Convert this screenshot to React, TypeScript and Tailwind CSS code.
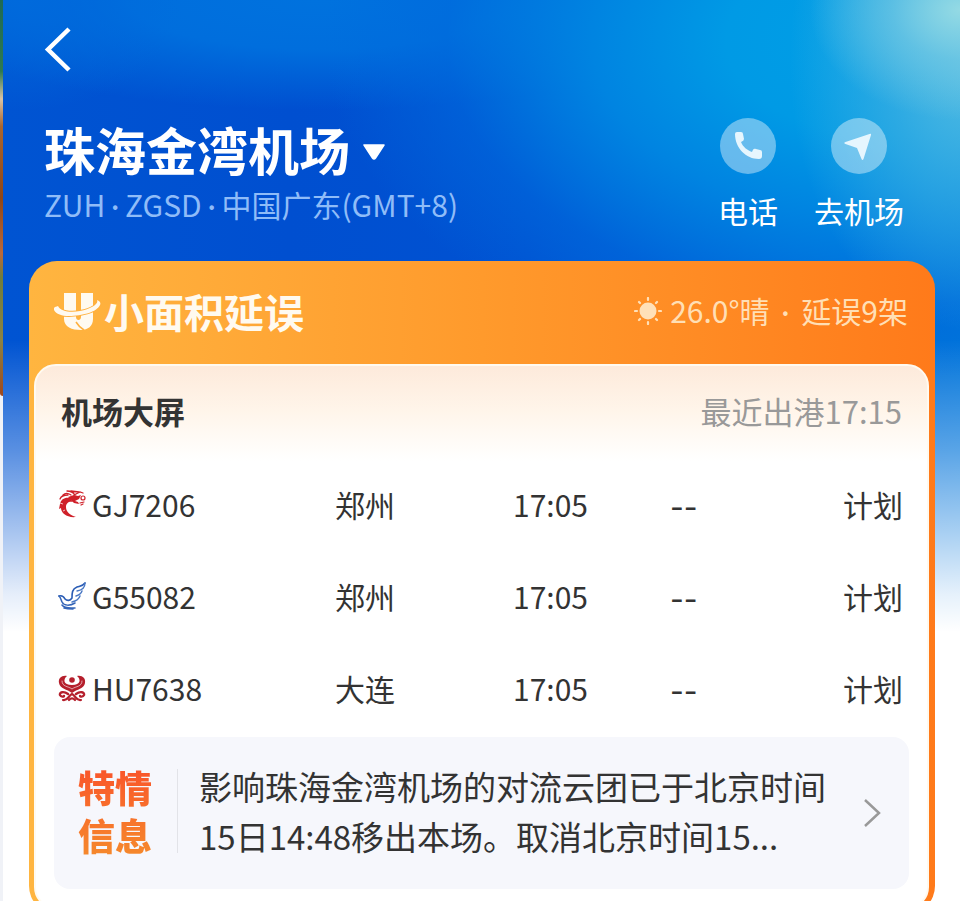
import React from "react";

type Flight = {
  code: string;
  city: string;
  time: string;
  actual: string;
  status: string;
  logo: React.ReactNode;
};

const DragonLogo = () => (
  <svg className="size-7 shrink-0" viewBox="0 0 28 28" fill="none" aria-hidden="true">
    <path d="M2 14c1-5 5-7 10-6l3 4c-4-1-7 1-7 5 0 5 4 8 10 10C9 28 3 23 3 18l-2 1z" fill="#cf2029" />
    <path
      d="M2 9c1-3 4-4 8-4M5 5c2-2 5-2 8 0M9 1c4 0 6 1 8 4M13 1l8 1M16 5l6-3 3 1"
      stroke="#cf2029"
      strokeWidth="1.300"
      strokeLinecap="round"
    />
    <path d="M10 7l6-2 4 1 3-1-2 4-4 2 3 1 1 2-5-1-3-3z" fill="#cf2029" />
    <path d="M22 13l4-1M23 15l2-1" stroke="#cf2029" strokeWidth="1.200" strokeLinecap="round" />
    <circle cx="25" cy="8" r="2" stroke="#cf2029" strokeWidth="1.200" />
    <path d="M2 13l3 1M5 21l2-1" stroke="#fff" strokeWidth="0.700" />
  </svg>
);

const BirdLogo = () => (
  <svg className="size-7 shrink-0" viewBox="0 0 28 28" fill="none" strokeLinecap="round" aria-hidden="true">
    <path d="M1 14c3-1 5 1 6 3 2 2 5 2 7-1 0-5 0-9 5-11 3-1 6-1 8-4" stroke="#2b5db5" strokeWidth="1.600" />
    <path d="M27 1c0 4-2 7-8 8M24 9c-1 3-3 4-6 5M22 14c-1 3-4 5-8 6" stroke="#4a78c4" strokeWidth="1.400" />
    <path d="M1 14c2 2 2 4 3 6 2 4 8 4 13 1M4 23c3 4 8 3 13 3M6 26c3 1 6 1 9 1" stroke="#3565b8" strokeWidth="1.500" />
  </svg>
);

const PhoenixLogo = () => (
  <svg className="size-7 shrink-0" viewBox="0 0 28 28" fill="none" strokeLinecap="round" aria-hidden="true">
    <circle cx="14" cy="6" r="2.800" fill="#b51f2c" />
    <path d="M9 2C4 1 0 4 1 9c1 6 8 6 13 10 5-4 12-4 13-10 1-5-3-8-8-7 4 3 4 9-5 9S5 5 9 2z" fill="#b51f2c" />
    <path d="M4 7c0 6 6 5 10 8 4-3 10-2 10-8" stroke="#fff" strokeWidth="0.600" />
    <path d="M10 20c-4-3-9-2-8 1 1 2 4 2 4 1M18 20c4-3 9-2 8 1-1 2-4 2-4 1" stroke="#b51f2c" strokeWidth="2.400" />
    <path d="M5 26c5 1 5-4 9-6 4 2 4 7 9 6M11 26q3-3 6 0" stroke="#b51f2c" strokeWidth="2.200" />
  </svg>
);

const flights: Flight[] = [
  { code: "GJ7206", city: "郑州", time: "17:05", actual: "--", status: "计划", logo: <DragonLogo /> },
  { code: "G55082", city: "郑州", time: "17:05", actual: "--", status: "计划", logo: <BirdLogo /> },
  { code: "HU7638", city: "大连", time: "17:05", actual: "--", status: "计划", logo: <PhoenixLogo /> },
];

const Sky = () => (
  <div className="absolute inset-x-0 top-0 -z-10 h-[640px] overflow-hidden bg-[linear-gradient(90deg,#0054d2_0%,#004fd0_30%,#0052d2_55%,#0074da_100%)]">
    <div className="absolute inset-0 bg-[radial-gradient(ellipse_420px_110px_at_33%_0px,#0072de_0%,#006edd_45%,transparent_100%)]" />
    <div className="absolute inset-0 bg-[radial-gradient(ellipse_160px_110px_at_2%_0px,#006adc_0%,transparent_100%)]" />
    <div className="absolute inset-0 bg-[radial-gradient(ellipse_560px_340px_at_92%_40px,#009fe6_0%,#009ae5_28%,#0084e1_52%,#006bdd8c_78%,transparent_100%)]" />
    <div className="absolute inset-0 bg-[radial-gradient(ellipse_180px_270px_at_101%_60px,#55bce2_0%,#3fb0e2b3_45%,transparent_100%)]" />
    <div className="absolute inset-0 bg-[radial-gradient(ellipse_150px_110px_at_100%_10px,#94dae4_0%,#76cbe4a6_45%,transparent_100%)]" />
    <div className="absolute inset-0 bg-[linear-gradient(to_bottom,transparent_340px,#ffffff59_450px,#ffffffa6_530px,#ffffffe6_595px,white_632px)]" />
  </div>
);

const DelayMark = () => (
  <svg className="h-10 w-12 shrink-0" viewBox="0 0 48 40" fill="none" aria-hidden="true">
    <path d="M10 2h12v24c0 4 5 4 5 0V2h12v26c0 7-5 11-12 11-9 0-17-3-17-11z" fill="#fffaf0" />
    <path d="M22 31q3 5 8 8" stroke="#ffb03d" strokeWidth="1.500" />
    <path
      d="M4 15c-2 1-5 1-4 4 2 4 8 6 15 6 13 0 28-4 31-11 1-2 0-4-3-5 2 4-6 9-17 11C16 22 6 20 4 15z"
      fill="#fffaf0"
      stroke="#ffb03d"
      strokeWidth="2"
      paintOrder="stroke"
    />
  </svg>
);

const SunIcon = () => (
  <svg className="size-7 shrink-0" viewBox="0 0 28 28" aria-hidden="true">
    <circle cx="14" cy="14" r="8.500" fill="#ffe0b8" />
    <path
      d="M14 1v2M14 25v2M1 14h2M25 14h2M5 5l1 1M22 22l1 1M5 23l1-1M22 6l1-1"
      stroke="#ffe0b8"
      strokeWidth="2.200"
      strokeLinecap="round"
    />
  </svg>
);

const Dot = () => <span className="px-1.5 font-['Lato']">·</span>;

const Header = () => (
  <header className="pt-[27px] pr-14 pb-[31px] pl-[41px] text-white">
    <button type="button" aria-label="返回" className="block">
      <svg className="h-[45px] w-7" viewBox="0 0 28 45" fill="none" aria-hidden="true">
        <path d="M25 2L4 22.500l21 20.500" stroke="#fff" strokeWidth="4.500" />
      </svg>
    </button>
    <div className="mt-[46px] flex items-start justify-between">
      <div>
        <button type="button" className="flex items-center gap-3">
          <h1 className="text-[51px] leading-[62px] font-bold">珠海金湾机场</h1>
          <svg className="mt-1.5 h-[18px] w-6" viewBox="0 0 24 18" aria-hidden="true">
            <path
              d="M2 2h20L13.500 15q-1.500 2-3 0z"
              fill="#fff"
              stroke="#fff"
              strokeWidth="1.500"
              strokeLinejoin="round"
            />
          </svg>
        </button>
        <p className="mt-1 text-[30px] leading-10 text-[#8fbcf8]">
          ZUH
          <Dot />
          ZGSD
          <Dot />
          中国广东(GMT+8)
        </p>
      </div>
      <nav className="flex gap-9 text-[30px] leading-10">
        <a href="#phone" className="flex flex-col items-center gap-4">
          <span className="flex size-14 items-center justify-center rounded-full bg-[#ffffff66]">
            <svg className="size-8" viewBox="0 0 32 32" fill="#e6f6fe" aria-hidden="true">
              <path d="M3 4q0-2 2-2h4q2 0 2 2l1 5q0 2-3 3c2 5 6 8 11 10 1-3 2-4 4-3l4 1q2 0 2 2v4q0 3-3 3C14 29 3 18 3 4z" />
            </svg>
          </span>
          电话
        </a>
        <a href="#route" className="flex flex-col items-center gap-4">
          <span className="flex size-14 items-center justify-center rounded-full bg-[#ffffff66]">
            <svg className="size-8" viewBox="0 0 32 32" fill="#e6f6fe" aria-hidden="true">
              <path d="M26.500 4Q28.500 3 28 5L20.500 29Q19.500 31 18.500 29L14 18 2.500 14Q0 13 2.500 12z" />
            </svg>
          </span>
          去机场
        </a>
      </nav>
    </div>
  </header>
);

const Notice = () => (
  <a href="#notice" className="flex items-center rounded-2xl bg-[#f6f7fc] px-6 pt-6 pb-7">
    <strong className="w-[76px] shrink-0 bg-linear-to-b from-[#f9502a] to-[#f58a2c] bg-clip-text text-[37px] leading-12 font-black text-transparent">
      特情信息
    </strong>
    <span className="mr-[21px] ml-[23px] h-[84px] w-px shrink-0 bg-[#e2e3e8]" />
    <p className="flex-1 text-[33px] leading-[50px]">
      影响珠海金湾机场的对流云团已于北京时间15日14:48移出本场。取消北京时间15...
    </p>
    <svg className="mt-1 ml-4 h-8 w-6 shrink-0" viewBox="0 0 24 32" fill="none" aria-hidden="true">
      <path d="M4 3l14 13L4 29" stroke="#999" strokeWidth="2.500" />
    </svg>
  </a>
);

const FlightBoard = () => (
  <section className="rounded-[22px] border-2 border-[#fffaf0] bg-[linear-gradient(to_bottom,#fdeadb_0px,#fff5ea_45px,#ffffff_95px)] px-[18px] pb-[18px]">
    <div className="flex h-[94px] items-center justify-between px-[7px] pb-1">
      <h2 className="text-[31px] leading-10 font-bold">机场大屏</h2>
      <p className="text-[31px] leading-10 text-[#999]">最近出港17:15</p>
    </div>
    <table className="mb-px w-full table-fixed text-left text-[30px]">
      <tbody>
        {flights.map((flight) => (
          <tr key={flight.code} className="h-23">
            <td className="w-[281px] pb-1 pl-1">
              <div className="flex items-center gap-1.5">
                {flight.logo}
                {flight.code}
              </div>
            </td>
            <td className="w-[178px] pb-1">{flight.city}</td>
            <td className="w-[157px] pb-1">{flight.time}</td>
            <td className="font-['Inter'] pt-0.5">{flight.actual}</td>
            <td className="pr-1.5 pb-1 text-right">{flight.status}</td>
          </tr>
        ))}
      </tbody>
    </table>
    <Notice />
  </section>
);

const App = () => {
  return (
    <div className="flex h-screen overflow-hidden bg-white font-['Noto_Sans_CJK_SC',sans-serif] text-[#333]">
      <aside className="w-[3px] shrink-0 bg-[#f0f2f7]">
        <div className="h-[396px] rounded-bl-sm bg-[linear-gradient(to_bottom,#1f6a55_0%,#2f7a50_18%,#d9c3a4_25%,#a9652e_32%,#8f4617_50%,#b9683a_64%,#6f7d3c_70%,#8a8244_86%,#a0481c_100%)]" />
      </aside>
      <div className="relative isolate min-w-0 flex-1">
        <Sky />
        <Header />
        <main className="mr-[25px] ml-[26px] rounded-[28px] bg-linear-to-r from-[#ffb540] via-[#ff9a2c] to-[#ff7a1a] pr-1.5 pb-[5px] pl-[5px]">
          <div className="flex h-[103px] items-center justify-between pr-[21px] pb-1 pl-5">
            <div className="flex items-center gap-0.5 text-[#fffaf0]">
              <DelayMark />
              <strong className="text-[40px] leading-[48px] font-bold">小面积延误</strong>
            </div>
            <p className="flex items-center gap-2 text-[30px] leading-10 text-[#ffdfb5]">
              <SunIcon />
              <span>
                26.0°晴
                <span className="px-3 font-['Lato']">·</span>
                延误9架
              </span>
            </p>
          </div>
          <FlightBoard />
        </main>
      </div>
    </div>
  );
};

export default App;
